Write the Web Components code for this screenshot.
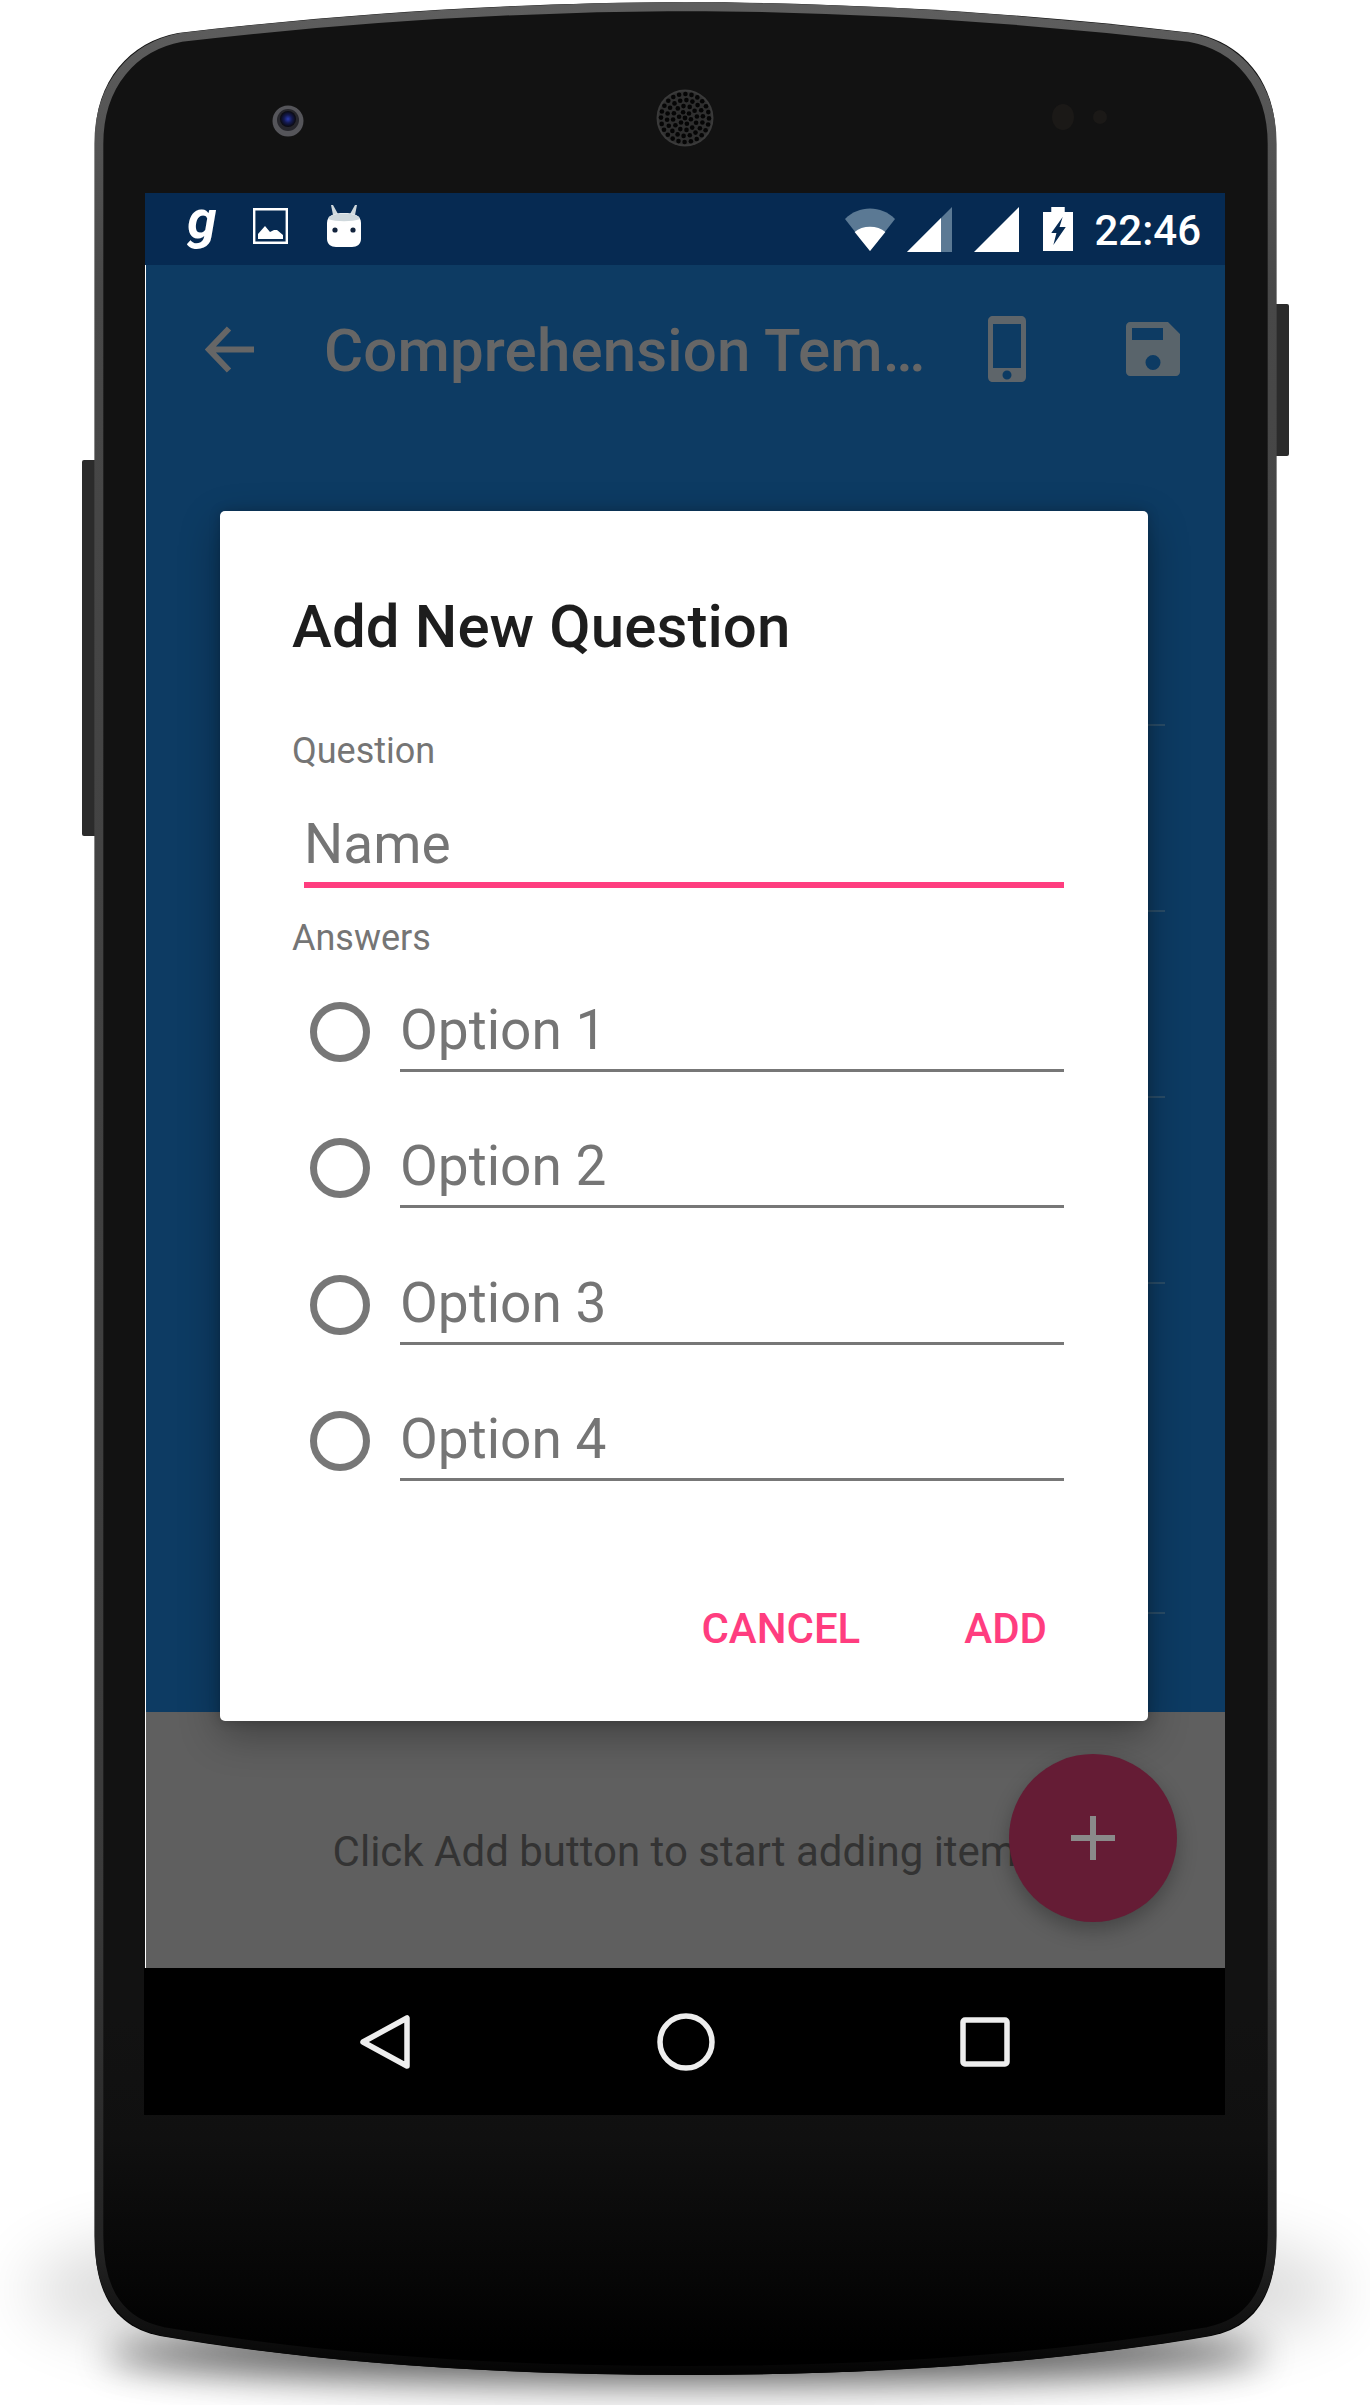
<!DOCTYPE html>
<html>
<head>
<meta charset="utf-8">
<title>Add New Question</title>
<style>
html, body { margin: 0; padding: 0; background: #fff; }
body { width: 1370px; height: 2405px; overflow: hidden; font-family: Roboto, "Liberation Sans", sans-serif; }
</style>
</head>
<body>
<phone-frame>
    <status-bar></status-bar>
    <app-toolbar title="Comprehension Tem…"></app-toolbar>
    <item-list></item-list>
    <empty-footer>Click Add button to start adding items</empty-footer>
    <nav-bar></nav-bar>
    <question-dialog heading="Add New Question"></question-dialog>
    <add-fab></add-fab>
</phone-frame>

<script>
class PhoneFrame extends HTMLElement {
    constructor() {
        super();
        this.shadowDOM = this.attachShadow({mode: "open"});
    }

    connectedCallback() {
        this.render();
    }

    speakerDots() {
        let dots = `<circle cx="685" cy="118" r="2.400" fill="#050505"/>`;
        for (let ring = 1; ring <= 4; ring++) {
            const count = ring * 6;
            for (let i = 0; i < count; i++) {
                const angle = (i / count) * Math.PI * 2 + ring * 0.2;
                const x = 685 + Math.cos(angle) * ring * 6;
                const y = 118 + Math.sin(angle) * ring * 6;
                dots += `<circle cx="${x.toFixed(1)}" cy="${y.toFixed(1)}" r="2.300" fill="#050505"/>`;
            }
        }
        return dots;
    }

    render() {
        const body = "M685.500 2 C870 3 1030 14 1193 33 C1241 42 1276 80 1276 140 L1276 2240 C1276 2300 1251 2328 1211 2336 C1071 2360 891 2375 685.500 2375 C480 2375 300 2360 160 2336 C120 2328 95 2300 95 2240 L95 140 C95 80 130 42 178 33 C341 14 501 3 685.500 2 Z";
        this.shadowDOM.innerHTML = `
        <style>
        :host {
            display: block;
            position: relative;
            width: 1370px;
            height: 2405px;
        }
        .body {
            position: absolute;
            left: 0;
            top: 0;
        }
        .screen {
            position: relative;
            display: flex;
            flex-direction: column;
            width: 1081px;
            height: 1922px;
            margin-left: 144px;
            top: 193px;
            overflow: hidden;
        }
        </style>
        <svg class="body" width="1370" height="2405" viewBox="0 0 1370 2405">
            <defs>
                <linearGradient id="rim" x1="0" y1="0" x2="0" y2="1">
                    <stop offset="0" stop-color="#5e5e5e"/>
                    <stop offset=".12" stop-color="#484848"/>
                    <stop offset=".8" stop-color="#3a3a3a"/>
                    <stop offset=".95" stop-color="#232323"/>
                    <stop offset="1" stop-color="#050505"/>
                </linearGradient>
                <linearGradient id="face" x1="0" y1="0" x2="0" y2="1">
                    <stop offset="0" stop-color="#121212"/>
                    <stop offset=".85" stop-color="#121212"/>
                    <stop offset=".9" stop-color="#101010"/>
                    <stop offset=".96" stop-color="#060606"/>
                    <stop offset=".99" stop-color="#000"/>
                </linearGradient>
                <filter id="soft" x="-30%" y="-300%" width="160%" height="700%">
                    <feGaussianBlur stdDeviation="18"/>
                </filter>
                <filter id="wide" x="-30%" y="-100%" width="160%" height="300%">
                    <feGaussianBlur stdDeviation="32"/>
                </filter>
                <radialGradient id="lens">
                    <stop offset="0" stop-color="#2c3cb0"/>
                    <stop offset=".5" stop-color="#141a50"/>
                    <stop offset="1" stop-color="#0a0a0e"/>
                </radialGradient>
            </defs>
            <ellipse cx="685" cy="2290" rx="660" ry="90" fill="#000" opacity=".14" filter="url(#wide)"/>
            <ellipse cx="685" cy="2354" rx="580" ry="28" fill="#000" opacity=".6" filter="url(#soft)"/>
            <rect x="82" y="460" width="16" height="376" rx="2" fill="#2b2b2b"/>
            <rect x="1273" y="304" width="16" height="152" rx="2" fill="#2b2b2b"/>
            <path d="${body}" fill="url(#face)"/>
            <path d="${body}" fill="none" stroke="url(#rim)" stroke-width="9" transform="translate(685.500 1188) scale(.9935 .9962) translate(-685.500 -1188)"/>
            <circle cx="288" cy="121" r="15.500" fill="#55555a"/>
            <circle cx="288" cy="120" r="11" fill="#26262c"/>
            <circle cx="288" cy="119" r="8" fill="url(#lens)"/>
            <circle cx="685" cy="118" r="28.500" fill="#3a3a3a"/>
            <circle cx="685" cy="118" r="26.500" fill="#2f2f2f"/>
            ${this.speakerDots()}
            <ellipse cx="1063" cy="117" rx="11" ry="13" fill="#1b1917"/>
            <circle cx="1100" cy="117" r="7" fill="#1b1917"/>
        </svg>
        <div class="screen"><slot></slot></div>
        `;
    }
}

class StatusBar extends HTMLElement {
    constructor() {
        super();
        this.shadowDOM = this.attachShadow({mode: "open"});
    }

    connectedCallback() {
        this.shadowDOM.innerHTML = `
        <style>
        :host {
            display: flex;
            flex: none;
            align-items: center;
            box-sizing: border-box;
            height: 72px;
            margin-left: 1px;
            padding: 0 24px 0 42px;
            background: #062a52;
            color: #fff;
            font-family: Roboto, sans-serif;
        }
        .left {
            display: flex;
            align-items: center;
            flex: 1;
            margin-top: -6px;
        }
        .g {
            width: 26px;
            margin-right: 40px;
            font: italic 700 54px/48px Roboto, sans-serif;
            transform: translateY(-6px) scaleX(.98);
        }
        .image { margin-right: 38px; }
        .right {
            display: flex;
            align-items: center;
        }
        .time {
            margin: 3px 0 0 21px;
            font-size: 42px;
            font-weight: 500;
            line-height: 48px;
        }
        svg { display: block; flex: none; }
        </style>
        <div class="left">
            <span class="g">g</span>
            <svg class="image" width="35" height="36" viewBox="0 0 35 36">
                <path d="M1.200 1.200h32.600v33.600h-32.600z" fill="none" stroke="#fff" stroke-width="2.400"/>
                <path d="M5 31 L5 26 L12 18 L17 24 L21 22 L24 22 L30 27 L30 31 Z" fill="#fff"/>
            </svg>
            <svg width="36" height="42" viewBox="0 0 36 42">
                <path d="M7 10 L5 0 L7 0 L12 9 Z M29 10 L31 0 L29 0 L24 9 Z" fill="#cfd8dc"/>
                <path d="M1 18 C1 10 9 8 18 8 C27 8 35 10 35 18 L35 34 C35 39 31 42 26 42 L10 42 C5 42 1 39 1 34 Z" fill="#fff"/>
                <path d="M2 14 C3 10 10 8.500 18 8.500 C26 8.500 33 10 34 14 C26 17 10 17 2 14 Z" fill="#cfd8dc"/>
                <circle cx="9" cy="25" r="2.600" fill="#12233c"/>
                <circle cx="27" cy="25" r="2.600" fill="#12233c"/>
            </svg>
        </div>
        <div class="right">
            <svg width="50" height="43" viewBox="0 0 52 43" preserveAspectRatio="none">
                <path d="M0 11 C14 -3 38 -3 52 11 L26 43 Z" fill="#5b7994"/>
                <path d="M10 24 C18 17 34 17 42 24 L26 43 Z" fill="#fff"/>
            </svg>
            <svg width="45" height="45" viewBox="0 0 45 45" style="margin-left:12px">
                <path d="M0 45 L45 0 L45 45 Z" fill="#5b7994"/>
                <path d="M0 45 L34 11 L34 45 Z" fill="#fff"/>
            </svg>
            <svg width="45" height="45" viewBox="0 0 45 45" style="margin-left:22px">
                <path d="M0 45 L45 0 L45 45 Z" fill="#fff"/>
            </svg>
            <svg width="30" height="44" viewBox="0 0 29 44" preserveAspectRatio="none" style="margin-left:24px">
                <path d="M8 0 H21 V5 H29 V44 H0 V5 H8 Z" fill="#fff"/>
                <path d="M19 10 L8 26 H13 L10 38 L22 20 H16 Z" fill="#062a52"/>
            </svg>
            <span class="time">22:46</span>
        </div>
        `;
    }
}

class AppToolbar extends HTMLElement {
    constructor() {
        super();
        this.shadowDOM = this.attachShadow({mode: "open"});
    }

    connectedCallback() {
        this.shadowDOM.innerHTML = `
        <style>
        :host {
            display: flex;
            flex: none;
            align-items: center;
            box-sizing: border-box;
            height: 168px;
            margin-left: 1px;
            border-left: 1px solid #fff;
            padding-left: 59px;
            background: #0d3b63;
            color: #666;
            font-family: Roboto, sans-serif;
        }
        h1 {
            margin: 4px 0 0 70px;
            width: 664px;
            flex: none;
            font-size: 60px;
            letter-spacing: .15px;
            line-height: 80px;
            font-weight: 500;
            white-space: nowrap;
        }
        svg { display: block; flex: none; }
        .save { margin-left: 100px; }
        </style>
        <svg width="49" height="47" viewBox="0 0 49 47">
            <path d="M49 23.500 H6 M24 2.500 L4 23.500 L24 44.500" fill="none" stroke="#666" stroke-width="6"/>
        </svg>
        <h1>${this.getAttribute("title")}</h1>
        <svg width="38" height="66" viewBox="0 0 38 66">
            <path fill-rule="evenodd" d="M5 0 H33 C36 0 38 2 38 5 V61 C38 64 36 66 33 66 H5 C2 66 0 64 0 61 V5 C0 2 2 0 5 0 Z M5 8 V52 H33 V8 Z M19 54.500 A4.500 4.500 0 1 0 19 63.500 A4.500 4.500 0 1 0 19 54.500 Z" fill="#5e656a"/>
        </svg>
        <svg class="save" width="54" height="54" viewBox="0 0 54 54">
            <path fill-rule="evenodd" d="M4 0 H42 L54 12 V50 C54 52 52 54 50 54 H4 C2 54 0 52 0 50 V4 C0 2 2 0 4 0 Z M6 6 V18 H37 V6 Z M27 33 A7.500 7.500 0 1 0 27 48 A7.500 7.500 0 1 0 27 33 Z" fill="#59646b"/>
        </svg>
        `;
    }
}

class ItemList extends HTMLElement {
    constructor() {
        super();
        this.shadowDOM = this.attachShadow({mode: "open"});
    }

    connectedCallback() {
        // only the right end of each row shows beside the dialog
        this.shadowDOM.innerHTML = `
        <style>
        :host {
            display: block;
            flex: none;
            box-sizing: border-box;
            height: 1279px;
            margin-left: 1px;
            border-left: 1px solid #fff;
            padding: 291px 60px 0 200px;
            background: #0d3b63;
            overflow: hidden;
        }
        .row {
            height: 186px;
            box-sizing: border-box;
            border-top: 2px solid #2a4d68;
        }
        .row.tall { height: 330px; }
        </style>
        <div class="row"></div>
        <div class="row"></div>
        <div class="row"></div>
        <div class="row tall"></div>
        <div class="row"></div>
        `;
    }
}

class EmptyFooter extends HTMLElement {
    constructor() {
        super();
        this.shadowDOM = this.attachShadow({mode: "open"});
    }

    connectedCallback() {
        this.shadowDOM.innerHTML = `
        <style>
        :host {
            display: flex;
            flex: none;
            align-items: center;
            justify-content: center;
            box-sizing: border-box;
            height: 256px;
            margin-left: 1px;
            border-left: 1px solid #fff;
            padding: 22px 0 0 0;
            background: #5f5f5f;
            color: #333;
            font-family: Roboto, sans-serif;
            font-size: 42px;
            white-space: nowrap;
        }
        </style>
        <slot></slot>
        `;
    }
}

class NavBar extends HTMLElement {
    constructor() {
        super();
        this.shadowDOM = this.attachShadow({mode: "open"});
    }

    connectedCallback() {
        this.shadowDOM.innerHTML = `
        <style>
        :host {
            display: flex;
            flex: 1;
            align-items: center;
            background: #000;
            padding-left: 215px;
        }
        svg { display: block; flex: none; }
        </style>
        <svg width="52" height="56" viewBox="0 0 52 56" style="margin-right:246px">
            <path d="M48 4 L48 52 L4 28 Z" fill="none" stroke="#eee" stroke-width="5.500" stroke-linejoin="round"/>
        </svg>
        <svg width="58" height="58" viewBox="0 0 58 58" style="margin-right:245px">
            <circle cx="29" cy="29" r="26" fill="none" stroke="#eee" stroke-width="5.500"/>
        </svg>
        <svg width="50" height="50" viewBox="0 0 50 50">
            <rect x="3" y="3" width="44" height="44" rx="2" fill="none" stroke="#eee" stroke-width="5.500"/>
        </svg>
        `;
    }
}

class OptionRow extends HTMLElement {
    constructor() {
        super();
        this.shadowDOM = this.attachShadow({mode: "open"});
    }

    connectedCallback() {
        this.shadowDOM.innerHTML = `
        <style>
        :host {
            display: flex;
            align-items: flex-end;
            height: 136.500px;
            box-sizing: border-box;
            padding-left: 89px;
        }
        .radio {
            width: 60px;
            height: 60px;
            box-sizing: border-box;
            border: 7px solid #777;
            border-radius: 50%;
            flex: none;
            margin-bottom: 10px;
        }
        .field {
            flex: 1;
            margin-left: 30px;
            height: 78px;
            line-height: 72px;
            box-sizing: border-box;
            border-bottom: 3px solid #777;
            color: #757575;
            font-size: 55px;
        }
        </style>
        <span class="radio"></span>
        <div class="field"><slot></slot></div>
        `;
    }
}

class QuestionDialog extends HTMLElement {
    constructor() {
        super();
        this.shadowDOM = this.attachShadow({mode: "open"});
    }

    connectedCallback() {
        this.shadowDOM.innerHTML = `
        <style>
        :host {
            position: absolute;
            left: 76px;
            top: 318px;
            width: 928px;
            height: 1210px;
            box-sizing: border-box;
            padding: 80px 84px 0 72px;
            background: #fff;
            border-radius: 5px;
            box-shadow: 0 14px 40px rgba(0,0,0,.32), 0 0 12px rgba(0,0,0,.2);
            font-family: Roboto, sans-serif;
        }
        h2 {
            margin: 0;
            color: #1d1d1d;
            font-size: 60px;
            letter-spacing: .1px;
            line-height: 72px;
            font-weight: 500;
        }
        .label {
            color: #757575;
            font-size: 36px;
            line-height: 44px;
        }
        .question { margin-top: 66px; }
        .name {
            margin: 33px 0 0 12px;
            height: 82px;
            line-height: 76px;
            box-sizing: border-box;
            border-bottom: 6px solid #ff3d7f;
            color: #757575;
            font-size: 55px;
        }
        .answers { margin-top: 28px; }
        .options { margin: -25px 0 0 -71px; }
        .actions {
            display: flex;
            justify-content: flex-end;
            gap: 104px;
            margin: 123px 17px 0 0;
            color: #ff3d7f;
            font-size: 42px;
            line-height: 50px;
            font-weight: 500;
        }
        </style>
        <h2>${this.getAttribute("heading")}</h2>
        <div class="label question">Question</div>
        <div class="name">Name</div>
        <div class="label answers">Answers</div>
        <div class="options">
            <option-row>Option 1</option-row>
            <option-row>Option 2</option-row>
            <option-row>Option 3</option-row>
            <option-row>Option 4</option-row>
        </div>
        <div class="actions"><span>CANCEL</span><span>ADD</span></div>
        `;
    }
}

class AddFab extends HTMLElement {
    constructor() {
        super();
        this.shadowDOM = this.attachShadow({mode: "open"});
    }

    connectedCallback() {
        this.shadowDOM.innerHTML = `
        <style>
        :host {
            position: absolute;
            left: 865px;
            top: 1561px;
            display: flex;
            align-items: center;
            justify-content: center;
            width: 168px;
            height: 168px;
            border-radius: 50%;
            background: #651c35;
            box-shadow: 0 8px 20px rgba(0,0,0,.28);
        }
        svg { display: block; }
        </style>
        <svg width="44" height="44" viewBox="0 0 44 44">
            <path d="M22 0 V44 M0 22 H44" fill="none" stroke="#8a8a8a" stroke-width="6"/>
        </svg>
        `;
    }
}

customElements.define("phone-frame", PhoneFrame);
customElements.define("status-bar", StatusBar);
customElements.define("app-toolbar", AppToolbar);
customElements.define("item-list", ItemList);
customElements.define("empty-footer", EmptyFooter);
customElements.define("nav-bar", NavBar);
customElements.define("option-row", OptionRow);
customElements.define("question-dialog", QuestionDialog);
customElements.define("add-fab", AddFab);
</script>
</body>
</html>
